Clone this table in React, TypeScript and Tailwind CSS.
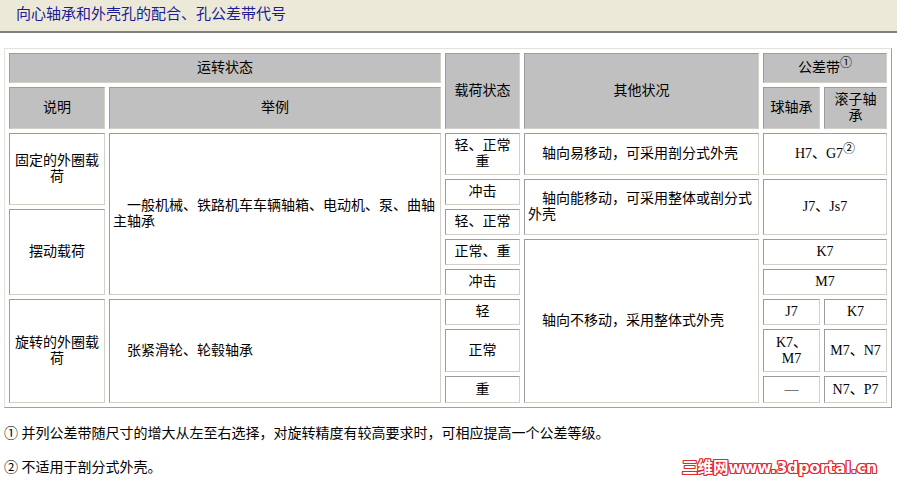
import type { ReactNode } from 'react'

type CellProps = {
  className?: string
  head?: boolean
  left?: boolean
  children: ReactNode
}

function Cell({ className = '', head, left, children }: CellProps) {
  return (
    <div
      className={`flex items-center border border-t-[#9c9c9c] border-l-[#9c9c9c] border-r-[#d4d0c8] border-b-[#d4d0c8] leading-[16px] ${
        head ? 'bg-[#c0c0c0]' : 'bg-white'
      } ${left ? 'justify-start pl-[3px] pr-[2px] text-left' : 'justify-center px-[4px] text-center'} ${className}`}
    >
      <div className={left ? 'indent-[14px]' : ''}>{children}</div>
    </div>
  )
}

const Sup = ({ children }: { children: ReactNode }) => (
  <span className="relative -top-[5px] text-[12px] leading-none">{children}</span>
)

export default function App() {
  return (
    <div className="h-[482px] w-[897px] overflow-hidden bg-white text-[14px] text-black font-['Liberation_Serif','Noto_Sans_CJK_SC',serif]">
      {/* Title bar */}
      <div className="flex h-[31px] items-center bg-[#ece9d8] pl-[16px] pb-[5px] text-[15px] text-[#1c1c94] font-['Noto_Sans_CJK_SC',sans-serif]">
        向心轴承和外壳孔的配合、孔公差带代号
      </div>
      <div className="h-[2px] bg-[#7f7f7f]" />

      {/* Table */}
      <div className="ml-[4px] mt-[15px] grid w-[888px] grid-cols-[96px_332px_75px_235px_57px_63px] grid-rows-[30px_42px_42px_26px_26px_26px_26px_26px_43px_27px] gap-[4px] border border-t-[#e4e2da] border-l-[#e4e2da] border-r-[#a0a0a0] border-b-[#a0a0a0] p-[4px]">
        {/* Header */}
        <Cell head className="col-span-2 col-start-1 row-start-1">运转状态</Cell>
        <Cell head className="col-start-3 row-span-2 row-start-1">载荷状态</Cell>
        <Cell head className="col-start-4 row-span-2 row-start-1">其他状况</Cell>
        <Cell head className="col-span-2 col-start-5 row-start-1">
          公差带<Sup>①</Sup>
        </Cell>
        <Cell head className="col-start-1 row-start-2">说明</Cell>
        <Cell head className="col-start-2 row-start-2">举例</Cell>
        <Cell head className="col-start-5 row-start-2">球轴承</Cell>
        <Cell head className="col-start-6 row-start-2">滚子轴承</Cell>

        {/* Column 1 */}
        <Cell className="col-start-1 row-span-2 row-start-3">固定的外圈载荷</Cell>
        <Cell className="col-start-1 row-span-3 row-start-5">摆动载荷</Cell>
        <Cell className="col-start-1 row-span-3 row-start-8">旋转的外圈载荷</Cell>

        {/* Column 2 */}
        <Cell left className="col-start-2 row-span-5 row-start-3">
          一般机械、铁路机车车辆轴箱、电动机、泵、曲轴主轴承
        </Cell>
        <Cell left className="col-start-2 row-span-3 row-start-8">
          张紧滑轮、轮毂轴承
        </Cell>

        {/* Column 3: load */}
        <Cell className="col-start-3 row-start-3">轻、正常重</Cell>
        <Cell className="col-start-3 row-start-4">冲击</Cell>
        <Cell className="col-start-3 row-start-5">轻、正常</Cell>
        <Cell className="col-start-3 row-start-6">正常、重</Cell>
        <Cell className="col-start-3 row-start-7">冲击</Cell>
        <Cell className="col-start-3 row-start-8">轻</Cell>
        <Cell className="col-start-3 row-start-9">正常</Cell>
        <Cell className="col-start-3 row-start-10">重</Cell>

        {/* Column 4: other */}
        <Cell left className="col-start-4 row-start-3">
          轴向易移动，可采用剖分式外壳
        </Cell>
        <Cell left className="col-start-4 row-span-2 row-start-4">
          轴向能移动，可采用整体或剖分式外壳
        </Cell>
        <Cell left className="col-start-4 row-span-5 row-start-6">
          轴向不移动，采用整体式外壳
        </Cell>

        {/* Tolerance zones */}
        <Cell className="col-span-2 col-start-5 row-start-3">
          H7、G7<Sup>②</Sup>
        </Cell>
        <Cell className="col-span-2 col-start-5 row-span-2 row-start-4">J7、Js7</Cell>
        <Cell className="col-span-2 col-start-5 row-start-6">K7</Cell>
        <Cell className="col-span-2 col-start-5 row-start-7">M7</Cell>
        <Cell className="col-start-5 row-start-8">J7</Cell>
        <Cell className="col-start-6 row-start-8">K7</Cell>
        <Cell className="col-start-5 row-start-9">K7、M7</Cell>
        <Cell className="col-start-6 row-start-9">M7、N7</Cell>
        <Cell className="col-start-5 row-start-10">—</Cell>
        <Cell className="col-start-6 row-start-10">N7、P7</Cell>
      </div>

      {/* Notes */}
      <div className="mt-[18px] pl-[4px] leading-[16px]">
        ① 并列公差带随尺寸的增大从左至右选择，对旋转精度有较高要求时，可相应提高一个公差等级。
      </div>
      <div className="mt-[18px] flex items-center justify-between pl-[4px] pr-[20px] leading-[16px]">
        <span>② 不适用于剖分式外壳。</span>
        <span className="text-[15.5px] font-bold text-white font-['DejaVu_Sans','Noto_Sans_CJK_SC',sans-serif] [text-shadow:1px_0_#e3262d,-1px_0_#e3262d,0_1px_#e3262d,0_-1px_#e3262d,1px_1px_#e3262d,-1px_-1px_#e3262d,1px_-1px_#e3262d,-1px_1px_#e3262d]">
          三维网www.3dportal.cn
        </span>
      </div>
    </div>
  )
}
